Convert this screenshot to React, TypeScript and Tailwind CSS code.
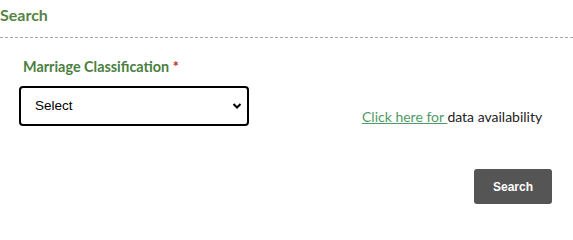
import React from "react";

export default function App() {
  return (
    <div className="w-[573px] h-[218px] bg-white overflow-hidden" style={{ fontFamily: "Lato, sans-serif" }}>
      <div className="h-[38px] border-b border-dashed border-[#a8a8a8] pt-[5px]">
        <h2 className="text-[16px] font-bold text-[#558445] leading-[20px]">Search</h2>
      </div>
      <div className="flex pt-[20px]">
        <div className="pl-[19px] w-[362px]">
          <label className="block pl-[4px] text-[14.4px] font-bold text-[#4b7f40] leading-[18px]">
            Marriage Classification <span className="text-[#b8342c]">*</span>
          </label>
          <div className="mt-[10px] relative w-[230px] h-[40px] border-2 border-black rounded-[4px] flex items-center pl-[14px]">
            <span className="text-[13.5px] text-black" style={{ fontFamily: "'Liberation Sans', Arial, sans-serif" }}>Select</span>
            <svg className="absolute right-[5px] top-[14px]" width="10" height="8" viewBox="0 0 10 8">
              <path d="M1.5 2 L5 5.5 L8.5 2" fill="none" stroke="black" strokeWidth="2" />
            </svg>
          </div>
        </div>
        <div className="pt-[50px] text-[14px] leading-[18px] text-[#222]">
          <a className="text-[#4f9a66] underline">Click here for </a>data availability
        </div>
      </div>
      <div className="flex justify-end pr-[21px] mt-[43px]">
        <button
          className="w-[78px] h-[35px] bg-[#555555] rounded-[3px] text-white text-[12px] font-bold"
          style={{ fontFamily: "'Liberation Sans', Arial, sans-serif" }}
        >
          Search
        </button>
      </div>
    </div>
  );
}
